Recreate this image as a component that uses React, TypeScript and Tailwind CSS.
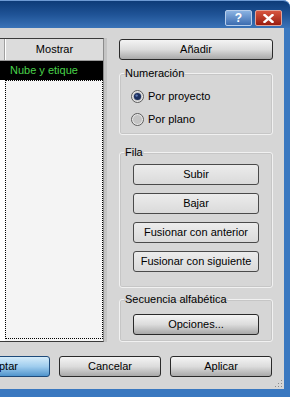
import React from 'react';

const font = { fontFamily: '"Liberation Sans", Arial, sans-serif' };

function DarkButton({ label, className = '' }: { label: string; className?: string }) {
  return (
    <button
      className={`h-[21px] shrink-0 rounded-[3px] border border-[#2a2a2a] bg-gradient-to-b from-[#f4f4f4] via-[#dcdcdc] to-[#a9a9a9] text-[11px] leading-none text-black ${className}`}
    >
      {label}
    </button>
  );
}

function LightButton({ label }: { label: string }) {
  return (
    <button className="h-[21px] w-full rounded-[3px] border border-[#4a4a4a] bg-gradient-to-b from-[#ececec] to-[#dadada] text-[11px] leading-none text-black">
      {label}
    </button>
  );
}

function Radio({ checked, label }: { checked?: boolean; label: string }) {
  return (
    <div className="flex h-[16px] items-center gap-[4px] text-[11px]">
      <svg width="13" height="13" viewBox="0 0 13 13">
        <circle cx="6.5" cy="6.5" r="6" fill="#e8e8e8" stroke="#5c5c5c" strokeWidth="1" />
        <circle cx="6.5" cy="6.5" r="4.5" fill="#c4c4c4" />
        {checked && <circle cx="6.5" cy="6.5" r="3.6" fill="#1c2f5e" />}
        {checked && <circle cx="5.6" cy="5.6" r="1.2" fill="#5d78b4" />}
      </svg>
      <span>{label}</span>
    </div>
  );
}

function Group({ title, className = '', children }: { title: string; className?: string; children: React.ReactNode }) {
  return (
    <fieldset className={`rounded-[3px] border border-[#f1f1f1] shadow-[inset_0_0_0_1px_#c6c6c6] ${className}`}>
      <legend className="ml-[4px] px-[1px] text-[11px] leading-[13px]">{title}</legend>
      {children}
    </fieldset>
  );
}

export default function App() {
  return (
    <div className="relative h-[397px] w-[294px] overflow-hidden bg-white text-black" style={font}>
      <div className="flex h-full w-[290px] flex-col rounded-tr-[7px] bg-[#3a78c0]">
        {/* Title bar */}
        <div className="flex h-[28px] shrink-0 items-start justify-end gap-[3px] rounded-tr-[7px] border-t border-[#6d9ad4] bg-gradient-to-b from-[#0d3b78] via-[#1f5396] to-[#3a73b8] pr-[8px] pt-[9px]">
          <div className="flex h-[16px] w-[27px] items-center justify-center rounded-[2px] border border-[#b6cdeb] bg-gradient-to-b from-[#8ab2e2] to-[#3d6db0] text-[12px] font-bold leading-none text-white">
            ?
          </div>
          <div className="flex h-[16px] w-[27px] items-center justify-center rounded-[2px] border border-[#e0a49a] bg-gradient-to-b from-[#d7553f] to-[#9a1c10]">
            <svg width="11" height="9" viewBox="0 0 11 9">
              <path d="M1.5 1 L9.5 8 M9.5 1 L1.5 8" stroke="white" strokeWidth="2.4" strokeLinecap="square" />
            </svg>
          </div>
        </div>

        {/* Client area */}
        <div className="mb-[8px] mr-[6px] flex flex-1 flex-col overflow-hidden bg-[#d6d6d6]">
          <div className="mt-[10px] flex h-[304px] shrink-0">
            {/* Table */}
            <div className="flex w-[107px] shrink-0 flex-col border-r-[3px] border-[#c4c4c4]">
              <div className="flex h-[304px] flex-col border-t border-b border-r border-[#3a3a3a] border-r-[#8c8c8c] bg-[#f4f4f4]">
                <div className="flex h-[22px] shrink-0 border-b border-[#9a9a9a] bg-[#dcdcdc] text-[11px]">
                  <div className="w-[5px] border-r border-[#a0a0a0]" />
                  <div className="flex flex-1 items-center justify-center border-l border-white">Mostrar</div>
                </div>
                <div className="flex h-[19px] shrink-0 items-center bg-black pl-[10px] text-[11px] text-[#49d34a]">
                  Nube y etique
                </div>
                <div className="flex flex-1">
                  <div className="w-[5px] bg-white" />
                  <div className="mb-[2px] flex-1 border border-dotted border-black bg-[#f4f4f4]" />
                </div>
              </div>
            </div>

            {/* Right column */}
            <div className="ml-[12px] flex w-[154px] shrink-0 flex-col">
              <DarkButton label="Añadir" className="mt-[1px] w-full" />

              <Group title="Numeración" className="mt-[7px] h-[68px]">
                <div className="flex flex-col gap-[7px] pl-[11px] pt-[8px]">
                  <Radio checked label="Por proyecto" />
                  <Radio label="Por plano" />
                </div>
              </Group>

              <Group title="Fila" className="mt-[11px] h-[143px]">
                <div className="flex flex-col gap-[8px] px-[13px] pt-[5px]">
                  <LightButton label="Subir" />
                  <LightButton label="Bajar" />
                  <LightButton label="Fusionar con anterior" />
                  <LightButton label="Fusionar con siguiente" />
                </div>
              </Group>

              <Group title="Secuencia alfabética" className="mt-[5px] h-[49px]">
                <div className="px-[13px] pt-[5px]">
                  <DarkButton label="Opciones..." className="w-full" />
                </div>
              </Group>
            </div>
          </div>

          {/* Bottom buttons */}
          <div className="mt-[14px] flex h-[21px] shrink-0 justify-end gap-[9px] pr-[12px]">
            <button className="h-[21px] w-[102px] shrink-0 rounded-[3px] border border-[#1d4a7a] bg-gradient-to-b from-[#d5ecfa] via-[#9fcdee] to-[#4f94cc] text-[11px] leading-none text-black">
              Aceptar
            </button>
            <DarkButton label="Cancelar" className="w-[102px]" />
            <DarkButton label="Aplicar" className="w-[102px]" />
          </div>

          <div className="flex flex-1 items-end justify-end pb-[1px] pr-[1px]">
            <svg width="8" height="8" viewBox="0 0 8 8">
              <rect x="6" y="0" width="1" height="1" fill="#8a8a8a" />
              <rect x="3" y="3" width="1" height="1" fill="#8a8a8a" />
              <rect x="6" y="3" width="1" height="1" fill="#8a8a8a" />
              <rect x="0" y="6" width="1" height="1" fill="#8a8a8a" />
              <rect x="3" y="6" width="1" height="1" fill="#8a8a8a" />
              <rect x="6" y="6" width="1" height="1" fill="#8a8a8a" />
            </svg>
          </div>
        </div>
      </div>
    </div>
  );
}
